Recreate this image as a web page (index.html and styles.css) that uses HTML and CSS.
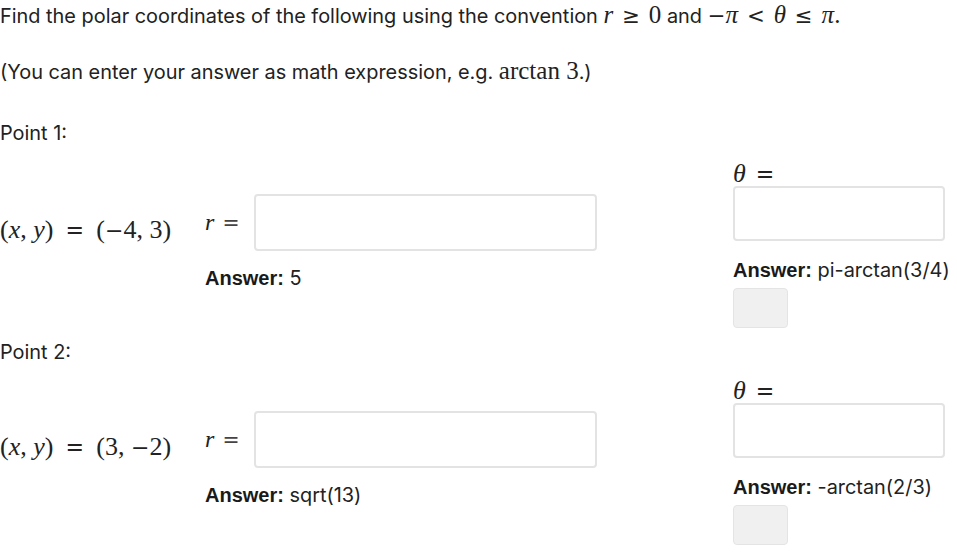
FILE: index.html
```html
<!DOCTYPE html>
<html>
<head>
<meta charset="utf-8">
<link rel="stylesheet" href="styles.css">
</head>
<body>
<p class="intro">Find the polar coordinates of the following using the convention <span class="m"><i>r</i><span class="rel">≥</span>0</span> and <span class="m"><span class="op">−</span><i>π</i><span class="rel">&lt;</span><i>θ</i><span class="rel">≤</span><i>π</i>.</span></p>
<p class="note">(You can enter your answer as math expression, e.g. <span class="m">arctan<span class="thin"></span>3</span>.)</p>

<section class="point">
  <p class="point-label">Point 1:</p>
  <div class="point-row">
    <div class="r-group">
      <div class="eq-row">
        <span class="m coord">(<i>x</i>,<span class="thin"></span><i>y</i>)<span class="rel">=</span>(<span class="op">−</span>4,<span class="thin"></span>3)</span>
        <span class="m var"><i>r</i><span class="rel">=</span></span>
        <input class="field r-field" type="text">
      </div>
      <p class="answer"><b>Answer:</b> 5</p>
    </div>
    <div class="theta-group">
      <div class="m theta-label"><span class="lift"><i>θ</i><span class="rel">=</span></span></div>
      <input class="field theta-field" type="text">
      <p class="answer"><b>Answer:</b> pi-arctan(3/4)</p>
      <button class="check" type="button"></button>
    </div>
  </div>
</section>

<section class="point">
  <p class="point-label">Point 2:</p>
  <div class="point-row">
    <div class="r-group">
      <div class="eq-row">
        <span class="m coord">(<i>x</i>,<span class="thin"></span><i>y</i>)<span class="rel">=</span>(3,<span class="thin"></span><span class="op">−</span>2)</span>
        <span class="m var"><i>r</i><span class="rel">=</span></span>
        <input class="field r-field" type="text">
      </div>
      <p class="answer"><b>Answer:</b> sqrt(13)</p>
    </div>
    <div class="theta-group">
      <div class="m theta-label"><span class="lift"><i>θ</i><span class="rel">=</span></span></div>
      <input class="field theta-field" type="text">
      <p class="answer"><b>Answer:</b> -arctan(2/3)</p>
      <button class="check" type="button"></button>
    </div>
  </div>
</section>
</body>
</html>
```

FILE: styles.css
```css
html, body {
  margin: 0;
  padding: 0;
  background: #fff;
}
body {
  font-family: Inter, "Noto Sans", sans-serif;
  font-size: 19.9px;
  line-height: 26px;
  color: #222;
}
p {
  margin: 0;
}
.m {
  font-family: "Liberation Serif", "DejaVu Serif", serif;
  font-size: 25px;
  white-space: nowrap;
}
.m i {
  font-style: italic;
}
.rel {
  font-family: "DejaVu Sans", sans-serif;
  font-size: 0.85em;
  margin: 0 0.42em;
}
.op {
  font-family: "DejaVu Sans", sans-serif;
  font-size: 0.85em;
}
.thin {
  display: inline-block;
  width: 0.25em;
}
.intro {
  padding-top: 2px;
}
.note {
  margin-top: 29px;
}
.point-label {
  margin-top: 35px;
}
.point + .point .point-label {
  margin-top: 11px;
}
.point-row {
  display: flex;
  align-items: center;
  margin-top: 11px;
}
.point + .point .point-row {
  margin-top: 9px;
}
.r-group {
  display: flex;
  flex-direction: column;
}
.eq-row {
  display: flex;
  align-items: center;
}
.coord {
  font-size: 26px;
  width: 205px;
  position: relative;
  top: 7px;
}
.coord .rel {
  margin: 0 0.55em;
}
.var {
  font-size: 24px;
  width: 49px;
}
.var .rel {
  color: #444;
  margin: 0 0.4em;
}
.field {
  box-sizing: border-box;
  border: 2px solid #e3e3e3;
  border-radius: 4px;
  background: #fff;
  margin: 0;
  padding: 0 10px;
  font: inherit;
}
.r-field {
  width: 343px;
  height: 57px;
}
.answer {
  margin-top: 14px;
  margin-left: 205px;
}
.answer b {
  font-family: "Liberation Sans", Arial, sans-serif;
  font-weight: 700;
  font-size: 20px;
  color: #1a1a1a;
}
.theta-group {
  display: flex;
  flex-direction: column;
  align-items: flex-start;
  margin-left: 136px;
}
.theta-label {
  font-size: 26px;
  line-height: 26px;
}
.lift {
  display: inline-block;
  transform: translateY(4px);
}
.theta-label .rel {
  margin: 0 0.45em;
}
.theta-field {
  width: 212px;
  height: 55px;
  margin-top: 3px;
}
.theta-group .answer {
  margin-left: 0;
  margin-top: 16px;
}
.check {
  width: 55px;
  height: 40px;
  margin-top: 5px;
  background: #f0f0f0;
  border: 1px solid #e4e4e4;
  border-radius: 4px;
  padding: 0;
}
```
